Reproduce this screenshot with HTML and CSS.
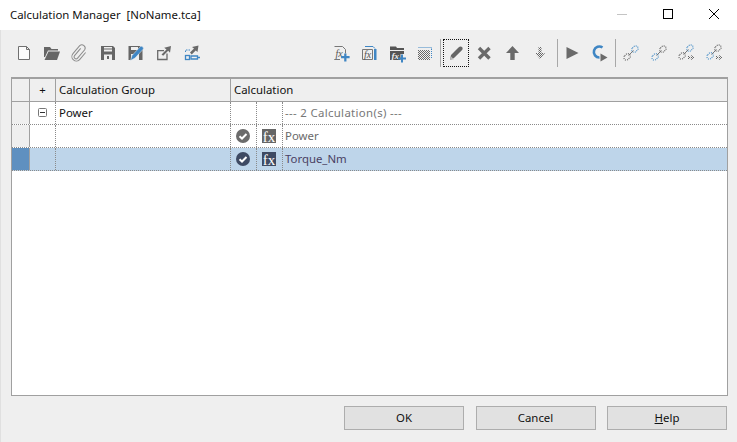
FILE: index.html
```html
<!DOCTYPE html>
<html lang="en">
<head>
<meta charset="utf-8">
<title>Calculation Manager</title>
<link rel="stylesheet" href="styles.css">
</head>
<body>
<div class="window">
  <header class="titlebar">
    <span class="title">Calculation Manager&nbsp; [NoName.tca]</span>
    <div class="winctl">
      <svg class="wbtn" viewBox="0 0 46 30"><path d="M18 14.500h10" stroke="#c4c4c4" fill="none"/></svg>
      <svg class="wbtn" viewBox="0 0 46 30"><rect x="18.500" y="9.500" width="9" height="9" stroke="#000" fill="none"/></svg>
      <svg class="wbtn" viewBox="0 0 46 30"><path d="M18 9l10 10M28 9L18 19" stroke="#000" fill="none"/></svg>
    </div>
  </header>

  <div class="toolbar">
    <div class="group">
      <button class="tool"><svg viewBox="0 0 20 20"><path d="M4.500 3.500h8l3 3v10h-11z M12.500 3.500v3h3" fill="#fbfbfb" stroke="#707070"/></svg></button>
      <button class="tool"><svg viewBox="0 0 20 20"><path d="M2 4h6l1.500 2H16v1.500H6L3 14H2z" fill="#666"/><path d="M6.500 8.500H18l-3 8.500H2.500z" fill="#666"/></svg></button>
      <button class="tool"><svg viewBox="0 0 20 20"><g transform="rotate(40 10 10)"><path d="M7.500 6v9.500a2 2 0 0 0 4 0V4.500a3.300 3.300 0 0 0-6.500 0V15a4.500 4.500 0 0 0 9 0V6" fill="none" stroke="#8c8c8c" stroke-width="1"/></g></svg></button>
      <button class="tool"><svg viewBox="0 0 20 20"><path d="M3 3h12l2 2v12H3z" fill="#666"/><rect x="6" y="4" width="8" height="4.500" fill="#efefef"/><rect x="6" y="5.500" width="8" height="1" fill="#666"/><rect x="6" y="11.500" width="8" height="5.500" fill="#efefef"/><rect x="9" y="13" width="2" height="3" fill="#666"/></svg></button>
      <button class="tool"><svg viewBox="0 0 20 20"><path d="M2.500 3h11l3 2v12h-14z" fill="#666"/><rect x="5" y="4" width="7" height="3" fill="#efefef"/><rect x="5" y="11" width="8" height="6" fill="#efefef"/><path d="M4.500 17.500l1.500-5 8.500-9c1-1 3.800 1.200 2.800 2.600l-8.300 9z" fill="#3f86c4" stroke="#efefef" stroke-width=".5"/></svg></button>
      <button class="tool"><svg viewBox="0 0 20 20"><path d="M13 10.500v6H3.700V7.700H10" fill="none" stroke="#6a6a6a" stroke-width="1.300"/><path d="M7.500 11.500l5-5-2.300-1.800 6.800-1.700-1 6.800-1.800-2-5 5z" fill="#6a6a6a"/></svg></button>
      <button class="tool"><svg viewBox="0 0 20 20"><path d="M3.500 9V7h4.500" fill="none" stroke="#3f86c4" stroke-dasharray="1.500 1"/><path d="M8 9.500l4-4-2-1.500 6.500-1.500-1 6.500-1.800-1.600-4 4z" fill="#6a6a6a"/><rect x="3.500" y="12.500" width="4" height="4" fill="none" stroke="#3f86c4" stroke-width="1.300"/><path d="M9 13h6.500v3H9zM15.500 14.500H18" fill="none" stroke="#3f86c4" stroke-width="1.300"/></svg></button>
    </div>
    <div class="group">
      <button class="tool"><svg viewBox="0 0 20 20"><path d="M3.500 3.500h8l3 3v4M9 16.500H3.500z" fill="none" stroke="#777"/><text x="4.500" y="13.500" class="fxi">fx</text><path d="M13 11h2.500v3H19v2.500h-3.500V20H13v-3.500H9.500V14H13z" fill="#3f86c4" transform="translate(1.500 .5) scale(.9)"/></svg></button>
      <button class="tool"><svg viewBox="0 0 20 20"><path d="M3.500 6.500h10v10h-10z" fill="none" stroke="#777"/><path d="M6 3.500h8l2 2" fill="none" stroke="#3f86c4"/><text x="5" y="14.500" class="fxi">fx</text><rect x="15" y="6" width="2.500" height="11" fill="#3f86c4"/></svg></button>
      <button class="tool"><svg viewBox="0 0 20 20"><path d="M3 3.500h6l1 1.500h7v2H3z" fill="#555"/><path d="M3 8h14v3h-3.500v6H3z" fill="#555"/><text x="4.500" y="15.500" class="fxw">fx</text><path d="M14 11.500h2v3h3v2h-3v3h-2v-3h-3v-2h3z" fill="#3f86c4"/></svg></button>
      <button class="tool"><svg viewBox="0 0 20 20"><defs><pattern id="chk" width="2" height="2" patternUnits="userSpaceOnUse"><rect width="1" height="1" fill="#666"/><rect x="1" y="1" width="1" height="1" fill="#666"/></pattern></defs><rect x="3" y="7" width="12" height="10" fill="url(#chk)"/><path d="M3.500 4.500h13v2" fill="none" stroke="#3f86c4" stroke-dasharray="1 1"/><path d="M16.500 6v9" stroke="#3f86c4" stroke-dasharray="1 1"/></svg></button>
      <span class="sep"></span>
      <button class="tool focus"><svg viewBox="0 0 20 20"><path d="M4 17l1-5 7.500-7.500c1.200-1.200 2.500-1.500 3.500-.5s.8 2.400-.4 3.600L8 15z" fill="#666"/><path d="M4 17l.8-3.800 3 3z" fill="#bbb"/></svg></button>
      <button class="tool"><svg viewBox="0 0 20 20"><path d="M5 5l10.500 10.500M15.500 5L5 15.500" stroke="#6a6a6a" stroke-width="3.400" fill="none"/></svg></button>
      <button class="tool"><svg viewBox="0 0 20 20"><path d="M10.500 3l6.500 7h-4.300v7H8.300v-7H4z" fill="#6a6a6a"/></svg></button>
      <button class="tool"><svg viewBox="0 0 20 20"><path d="M8.500 4h3v6h3.500L10 16 5 10h3.500z" fill="url(#chk)"/></svg></button>
      <span class="sep sep-b"></span>
      <button class="tool"><svg viewBox="0 0 20 20"><path d="M4.500 4v12L16.500 10z" fill="#6a6a6a"/></svg></button>
      <button class="tool"><svg viewBox="0 0 20 20"><path d="M12.500 4.500A5.500 5.500 0 1 0 9.500 14.500" fill="none" stroke="#3f86c4" stroke-width="2.600"/><path d="M10.500 10.500v8l7-4z" fill="#6a6a6a"/></svg></button>
      <span class="sep sep-c"></span>
      <button class="tool"><svg viewBox="0 0 20 20"><g transform="rotate(-45 10 10)" fill="none" stroke-width="1.200" stroke-dasharray="1 1"><rect x="1" y="7.500" width="7" height="5" rx="2.500" stroke="#666"/><rect x="12" y="7.500" width="7" height="5" rx="2.500" stroke="#4a90c8"/></g><path d="M7.500 12.500l5-5" stroke="#777"/></svg></button>
      <button class="tool"><svg viewBox="0 0 20 20"><g transform="rotate(-45 10 10)" fill="none" stroke-width="1.200" stroke-dasharray="1 1"><rect x="1" y="7.500" width="7" height="5" rx="2.500" stroke="#4a90c8"/><rect x="12" y="7.500" width="7" height="5" rx="2.500" stroke="#666"/></g><path d="M7.500 12.500l5-5" stroke="#777"/></svg></button>
      <button class="tool"><svg viewBox="0 0 20 20"><g transform="rotate(-45 9 9)" fill="none" stroke-width="1.200" stroke-dasharray="1 1"><rect x="0" y="6.500" width="7" height="5" rx="2.500" stroke="#666"/><rect x="11" y="6.500" width="7" height="5" rx="2.500" stroke="#4a90c8"/></g><path d="M6.500 11.500l5-5" stroke="#777"/><path d="M11 12l3.500 2.500L11 17zM14 12l3.500 2.500L14 17z" fill="url(#chk)"/></svg></button>
      <button class="tool"><svg viewBox="0 0 20 20"><g transform="rotate(-45 9 9)" fill="none" stroke-width="1.200" stroke-dasharray="1 1"><rect x="0" y="6.500" width="7" height="5" rx="2.500" stroke="#4a90c8"/><rect x="11" y="6.500" width="7" height="5" rx="2.500" stroke="#666"/></g><path d="M6.500 11.500l5-5" stroke="#777"/><path d="M11 12l3.500 2.500L11 17zM14 12l3.500 2.500L14 17z" fill="url(#chk)"/></svg></button>
    </div>
  </div>

  <div class="grid">
    <div class="row head">
      <div class="c hdr"></div>
      <div class="c plus">+</div>
      <div class="c group-col">Calculation Group</div>
      <div class="c calc-head">Calculation</div>
    </div>
    <div class="row">
      <div class="c hdr"></div>
      <div class="c expander"><svg viewBox="0 0 9 9"><rect x=".5" y=".5" width="8" height="8" rx="1" fill="none" stroke="#777"/><path d="M2 4.500h5" stroke="#333"/></svg></div>
      <div class="c group-col name">Power</div>
      <div class="c st"></div>
      <div class="c ic"></div>
      <div class="c txt muted">--- 2 Calculation(s) ---</div>
    </div>
    <div class="row">
      <div class="c hdr"></div>
      <div class="c"></div>
      <div class="c group-col"></div>
      <div class="c st"><svg viewBox="0 0 14 14"><circle cx="7" cy="7" r="7" fill="#6b6b6b"/><path d="M3.500 7.200l2.500 2.300 4.500-4.500" fill="none" stroke="#fff" stroke-width="2"/></svg></div>
      <div class="c ic"><svg viewBox="0 0 14 14"><rect width="14" height="14" fill="#666"/><text x="7" y="12.500" class="fxb">fx</text></svg></div>
      <div class="c txt power">Power</div>
    </div>
    <div class="row sel">
      <div class="c hdr"></div>
      <div class="c"></div>
      <div class="c group-col"></div>
      <div class="c st"><svg viewBox="0 0 14 14"><circle cx="7" cy="7" r="7" fill="#3e4a63"/><path d="M3.500 7.200l2.500 2.300 4.500-4.500" fill="none" stroke="#fff" stroke-width="2"/></svg></div>
      <div class="c ic"><svg viewBox="0 0 14 14"><rect width="14" height="14" fill="#3e4a63"/><text x="7" y="12.500" class="fxb">fx</text></svg></div>
      <div class="c txt torque">Torque_Nm</div>
    </div>
  </div>

  <footer class="footer">
    <button class="btn">OK</button>
    <button class="btn">Cancel</button>
    <button class="btn"><u>H</u>elp</button>
  </footer>
</div>
</body>
</html>
```

FILE: styles.css
```css
* { box-sizing: border-box; }
html, body { margin: 0; padding: 0; }
body {
  width: 737px;
  height: 442px;
  overflow: hidden;
  background: #efefef;
  font-family: "Noto Sans", "Open Sans", sans-serif;
  font-size: 11.4px;
  color: #111;
}
.window {
  width: 737px;
  height: 442px;
  display: flex;
  flex-direction: column;
  border-left: 1px solid #e0e0e0;
}
.titlebar {
  height: 30px;
  background: #fff;
  display: flex;
  align-items: center;
  justify-content: space-between;
  padding-left: 10px;
  margin-left: -1px;
}
.title { position: relative; top: -1px; }
.winctl { display: flex; }
.wbtn { width: 46px; height: 30px; display: block; }
.toolbar {
  height: 47px;
  display: flex;
  justify-content: space-between;
  align-items: center;
  padding: 0 8px 1px 9px;
}
.group { display: flex; align-items: center; }
.tool {
  width: 28px;
  height: 28px;
  padding: 0;
  border: 0;
  background: none;
  display: flex;
  align-items: center;
  justify-content: center;
}
.tool svg { width: 20px; height: 20px; display: block; }
.focus {
  width: 26px;
  margin: 0 1px;
  outline: 1px dotted #111;
  outline-offset: -1px;
}
.sep { width: 1px; height: 28px; background: #a8a8a8; margin: 0 1px; }
.sep-b { margin: 0 0 0 3px; }
.sep-c { margin: 0 1px; }
.fxi { font: italic 10px "Liberation Serif", serif; fill: #555; }
.fxw { font: italic bold 9px "Liberation Serif", serif; fill: #efefef; }
.fxb { font: 15px "Liberation Serif", serif; fill: #fff; text-anchor: middle; }
.grid {
  margin-left: 10px;
  width: 717px;
  height: 319px;
  background: #fff;
  border: 1px solid #a0a0a0;
  border-top-width: 2px;
}
.row {
  display: grid;
  grid-template-columns: 18px 26px 175px 26px 26px 1fr;
  height: 23px;
  border-bottom: 1px dotted #8a8a8a;
}
.row.head {
  height: 23px;
  grid-template-columns: 18px 26px 175px 1fr;
  background: #efefef;
  border-bottom: 1px solid #a0a0a0;
}
.c {
  display: flex;
  align-items: center;
  min-width: 0;
  border-right: 1px dotted #8a8a8a;
  padding: 0 0 1px 3px;
  white-space: nowrap;
}
.c:last-child { border-right: 0; }
.c svg { width: 14px; height: 14px; display: block; }
.hdr { background: #efefef; border-right: 1px solid #a0a0a0; }
.head .c { border-right: 1px solid #a0a0a0; }
.head .c:last-child { border-right: 0; }
.plus, .expander { justify-content: center; padding-left: 0; }
.expander svg { width: 9px; height: 9px; }
.st, .ic { justify-content: center; padding: 0 2px 0 0; }
.txt { padding-left: 2px; }
.muted { color: #777; letter-spacing: .33px; }
.power { color: #6a6a6a; }
.sel { background: #bed5ea; }
.sel .hdr { background: #5f90c0; }
.torque { color: #4a3f63; }
.footer {
  display: flex;
  justify-content: flex-end;
  gap: 11.5px;
  padding: 10px 10px 0 0;
}
.btn {
  width: 120px;
  height: 24px;
  padding: 0 0 1px;
  background: #e1e1e1;
  border: 1px solid #adadad;
  font: inherit;
  color: #111;
}
```
